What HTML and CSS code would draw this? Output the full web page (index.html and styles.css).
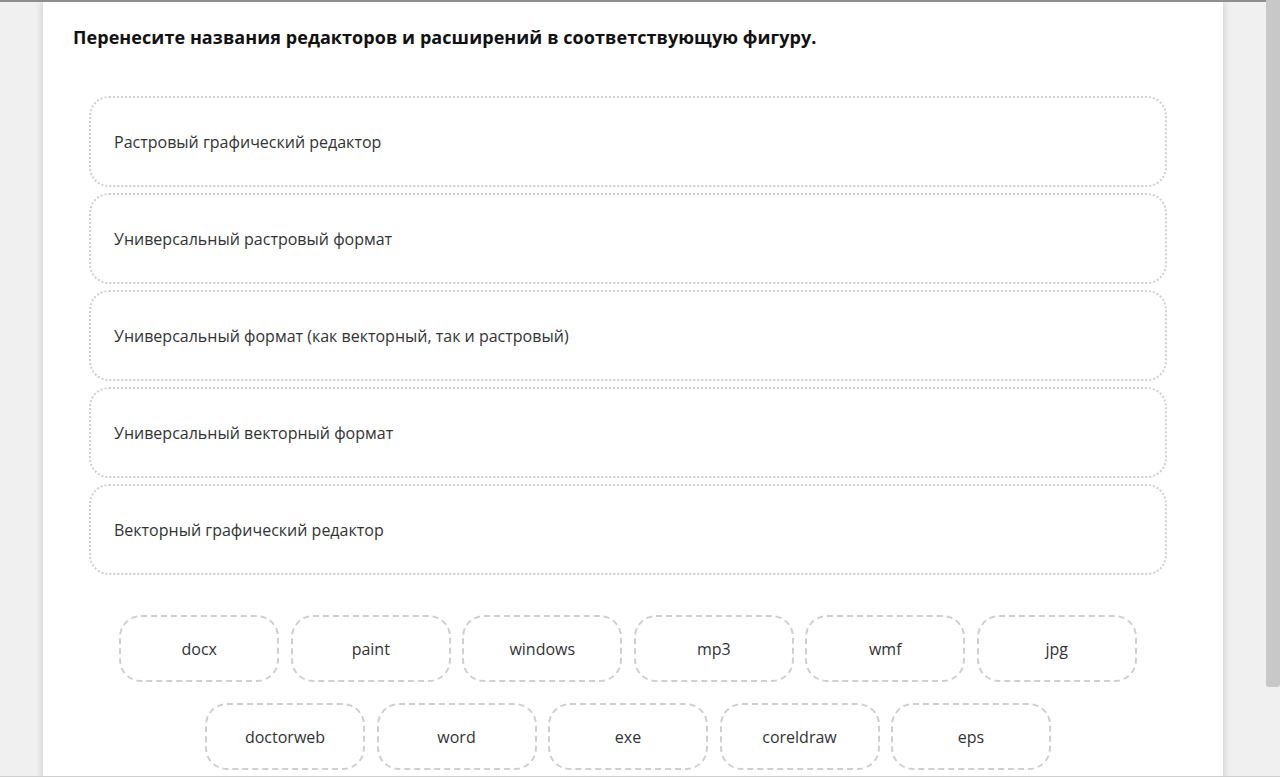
FILE: index.html
```html
<!DOCTYPE html>
<html lang="ru">
<head>
<meta charset="utf-8">
<link rel="stylesheet" href="styles.css">
</head>
<body>
<div class="window">
  <div class="viewport">
    <div class="card">
      <h1 class="title">Перенесите названия редакторов и расширений в соответствующую фигуру.</h1>
      <div class="zones">
        <div class="zone">Растровый графический редактор</div>
        <div class="zone">Универсальный растровый формат</div>
        <div class="zone">Универсальный формат (как векторный, так и растровый)</div>
        <div class="zone">Универсальный векторный формат</div>
        <div class="zone">Векторный графический редактор</div>
      </div>
      <div class="chips">
        <div class="chip">docx</div>
        <div class="chip">paint</div>
        <div class="chip">windows</div>
        <div class="chip">mp3</div>
        <div class="chip">wmf</div>
        <div class="chip">jpg</div>
        <div class="chip">doctorweb</div>
        <div class="chip">word</div>
        <div class="chip">exe</div>
        <div class="chip">coreldraw</div>
        <div class="chip">eps</div>
      </div>
    </div>
  </div>
  <div class="scrollbar"><div class="thumb"></div></div>
</div>
</body>
</html>
```
FILE: styles.css
```css
html, body {
  margin: 0;
  padding: 0;
  height: 777px;
  overflow: hidden;
}
body {
  background: #f0f0f0;
  font-family: "Open Sans", "Liberation Sans", sans-serif;
  color: #333;
}
.window {
  display: flex;
  height: 777px;
  border-top: 2px solid #8e8e8e;
  border-bottom: 1px solid #cfcfcf;
  box-sizing: border-box;
}
.viewport {
  flex: 1;
  overflow: hidden;
}
.card {
  margin-left: 43px;
  width: 1180px;
  min-height: 900px;
  background: #fff;
  box-shadow: 0 0 8px rgba(0,0,0,0.18);
  padding: 23px 56px 0 46px;
  box-sizing: border-box;
}
.title {
  margin: 0 0 0 -16px;
  font-size: 18px;
  font-weight: 700;
  color: #111;
  line-height: 24px;
  letter-spacing: 0.07px;
}
.zones {
  margin-top: 47px;
  display: flex;
  flex-direction: column;
  gap: 6px;
}
.zone {
  height: 91px;
  box-sizing: border-box;
  border: 2px dotted #d0d0d0;
  border-radius: 20px;
  display: flex;
  align-items: center;
  padding-left: 23px;
  font-size: 16px;
  color: #333;
}
.chips {
  margin-top: 40px;
  display: flex;
  flex-wrap: wrap;
  justify-content: center;
  column-gap: 11.5px;
  row-gap: 21px;
}
.chip {
  width: 160px;
  height: 67px;
  box-sizing: border-box;
  border: 2px dashed #cfcfcf;
  border-radius: 22px;
  display: flex;
  align-items: center;
  justify-content: center;
  font-size: 16px;
  color: #333;
}
.scrollbar {
  width: 14px;
  background: #f0f0f0;
  position: relative;
}
.thumb {
  height: 687px;
  margin-top: -2px;
  background: #c8c8c8;
  border-radius: 0 0 3px 3px;
}
```
